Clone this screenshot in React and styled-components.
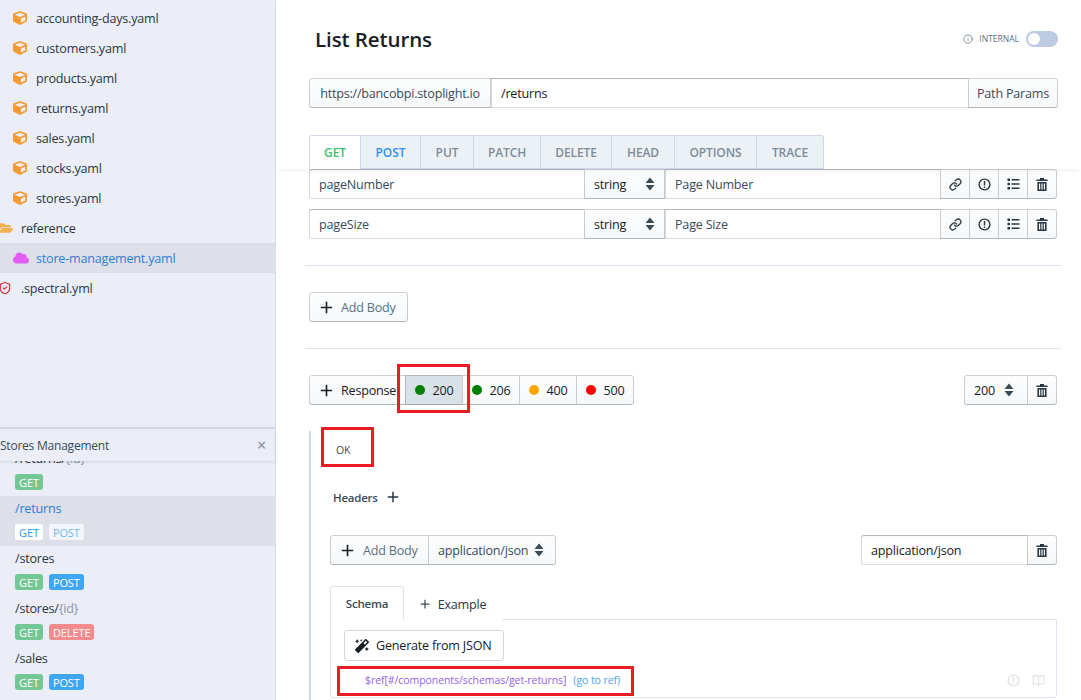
import React from 'react';
import styled, { createGlobalStyle } from 'styled-components';
import { FaCube, FaFolderOpen, FaCloud, FaMagic } from 'react-icons/fa';
import { Link as LinkIcon, ShieldCheck, Info, BookOpen } from 'lucide-react';

const Global = createGlobalStyle`
  html, body { margin: 0; padding: 0; height: 100%; overflow: hidden; background: #fff; }
  body { font-family: "Open Sans", "Noto Sans", sans-serif; font-size: 12.6px; color: #182026; letter-spacing: -0.22px; }
  * { box-sizing: border-box; }
`;

const Page = styled.div`
  position: relative;
  display: flex;
  width: 1081px;
  height: 700px;
  overflow: hidden;
`;

const Sidebar = styled.aside`
  display: flex;
  flex-direction: column;
  width: 276px;
  flex: none;
  height: 700px;
  background: #ebeef7;
  border-right: 1px solid #d8dde8;
`;

const Tree = styled.div`
  height: 429px;
  flex: none;
  padding-top: 3px;
  border-bottom: 2px solid #d2d9e6;
`;

const TreeRow = styled.div`
  display: flex;
  align-items: center;
  height: 30px;
  gap: ${p => (p.$depth ? 10 : 8)}px;
  padding-left: ${p => (p.$depth ? 13 : 0)}px;
  background: ${p => (p.$active ? '#dde0e8' : 'transparent')};
  color: ${p => (p.$active ? '#2b7fd4' : '#293742')};
`;

const TreeIcon = styled.span`
  display: flex;
  align-items: center;
  justify-content: flex-start;
  width: 13px;
  height: 14px;
  flex: none;
  color: ${p => p.$color};
  margin-left: ${p => p.$shift || 0}px;
  margin-right: ${p => -(p.$shift || 0)}px;
  svg { flex: none; }
`;

const PanelHeader = styled.div`
  position: relative;
  z-index: 2;
  display: flex;
  align-items: center;
  justify-content: space-between;
  height: 32px;
  flex: none;
  padding-right: 9px;
  background: #ebeef7;
  box-shadow: 0 1px 3px rgba(16, 22, 26, 0.12);
  color: #394b59;
  font-size: 12px;
`;

const CloseMark = styled.span`
  color: #7c8792;
  font-size: 16px;
  line-height: 1;
`;

const EndpointList = styled.div`
  flex: 1;
  min-height: 0;
  overflow: hidden;
`;

const EndpointTrack = styled.div`
  margin-top: -15px;
`;

const Endpoint = styled.div`
  height: 50px;
  padding: 3px 0 0 15px;
  background: ${p => (p.$active ? '#dde0e8' : 'transparent')};
  color: ${p => (p.$active ? '#2b7fd4' : '#293742')};
`;

const EndpointPath = styled.div`
  height: 20px;
  line-height: 20px;
`;

const PathParam = styled.span`
  color: #8a949e;
`;

const BadgeRow = styled.div`
  display: flex;
  gap: 6px;
  margin-top: 5px;
`;

const Badge = styled.span`
  display: flex;
  align-items: center;
  justify-content: center;
  height: 16px;
  padding: 0 4px;
  border-radius: 3px;
  font-size: 11px;
  font-weight: 500;
  letter-spacing: -0.1px;
  background: ${p => p.$bg};
  color: ${p => p.$fg || '#fff'};
`;

const Main = styled.main`
  flex: 1;
  min-width: 0;
  height: 700px;
  background: #fff;
`;

const Header = styled.header`
  position: relative;
  height: 169px;
  padding: 0 23px 0 33px;
  display: flex;
  flex-direction: column;
  box-shadow: 0 3px 6px -3px rgba(16, 22, 26, 0.1);
`;

const TitleRow = styled.div`
  display: flex;
  align-items: center;
  justify-content: space-between;
  height: 78px;
  padding: 0 0 0 6px;
`;

const Title = styled.h1`
  margin: 0 0 1px;
  font-size: 20.5px;
  font-weight: 600;
  letter-spacing: -0.1px;
  color: #182026;
`;

const InternalToggle = styled.div`
  display: flex;
  align-items: center;
  gap: 6px;
  font-size: 8.5px;
  color: #5c6f88;
  margin-bottom: 1px;
  letter-spacing: 0;
`;

const Toggle = styled.span`
  display: block;
  width: 32px;
  height: 16px;
  margin-left: 1px;
  padding: 2px;
  border-radius: 8px;
  background: #bccae4;
`;

const Knob = styled.span`
  display: block;
  width: 12px;
  height: 12px;
  border-radius: 50%;
  background: #fff;
`;

const Group = styled.div`
  display: flex;
  height: 30px;
  flex: ${p => (p.$fill ? 1 : '0 0 auto')};
`;

const ButtonPart = styled.div`
  display: flex;
  align-items: center;
  justify-content: ${p => (p.$center ? 'center' : p.$spread ? 'space-between' : 'flex-start')};
  gap: ${p => p.$gap ?? 8}px;
  width: ${p => (p.$w ? `${p.$w}px` : 'auto')};
  flex: none;
  padding: 0 ${p => p.$pad ?? 0}px;
  color: ${p => p.$color || '#182026'};
  background: ${p => (p.$on ? '#d8e1e8' : 'linear-gradient(180deg, rgba(255,255,255,0.8), rgba(255,255,255,0)) #f5f8fa')};
  box-shadow: inset 0 0 0 1px rgba(16, 22, 26, 0.2), inset 0 -1px 0 rgba(16, 22, 26, 0.1);
  margin-left: -1px;
  white-space: nowrap;
  &:first-child { margin-left: 0; border-radius: 3px 0 0 3px; }
  &:last-child { border-radius: 0 3px 3px 0; }
  &:only-child { border-radius: 3px; }
`;

const Field = styled.div`
  display: flex;
  align-items: center;
  flex: ${p => (p.$w ? 'none' : 1)};
  width: ${p => (p.$w ? `${p.$w}px` : 'auto')};
  min-width: 0;
  padding: 0 10px;
  background: #fff;
  color: ${p => p.$color || '#182026'};
  box-shadow: inset 0 0 0 1px rgba(16, 22, 26, 0.15), inset 0 1px 1px rgba(16, 22, 26, 0.2);
  white-space: nowrap;
  &:first-child { border-radius: 3px 0 0 3px; }
`;

const MethodTabs = styled.div`
  display: flex;
  margin-top: 27px;
  height: 34px;
`;

const MethodTab = styled.div`
  display: flex;
  align-items: center;
  justify-content: center;
  width: ${p => p.$w}px;
  font-size: 12px;
  font-weight: 600;
  letter-spacing: -0.1px;
  color: ${p => p.$color || '#7e8c9a'};
  background: ${p => (p.$on ? '#fff' : '#ebf1f5')};
  border: 1px solid #d0d8e8;
  border-left-width: ${p => (p.$first ? 1 : 0)}px;
  border-bottom: ${p => (p.$on ? 0 : '1px solid #d0d8e8')};
  border-radius: ${p => (p.$first ? '3px 0 0 0' : p.$last ? '0 3px 0 0' : 0)};
`;

const Content = styled.div`
  padding: 0 24px 0 33px;
`;

const ParamRow = styled.div`
  display: flex;
  margin-bottom: 10px;
`;

const Divider = styled.hr`
  border: 0;
  height: 1px;
  background: #dde3ee;
  margin: 26px -4px;
  width: 756px;
`;

const SpaceRow = styled.div`
  display: flex;
  justify-content: space-between;
`;

const Dot = styled.span`
  width: 10px;
  height: 10px;
  border-radius: 50%;
  background: ${p => p.$color};
  flex: none;
`;

const ResponseBody = styled.div`
  margin-top: 26px;
  height: 300px;
  padding-left: 19px;
  border-left: 2px solid #ced9e0;
`;

const OkLine = styled.div`
  height: 38px;
  padding: 12px 0 0 6px;
  font-size: 10.5px;
  line-height: 14px;
  color: #394b59;
`;

const HeadersRow = styled.div`
  display: flex;
  align-items: center;
  gap: 9px;
  margin-top: 18px;
  padding-left: 3px;
  height: 20px;
  font-size: 11.5px;
  font-weight: 600;
  color: #394b59;
`;

const BodyRow = styled.div`
  display: flex;
  justify-content: space-between;
  margin-top: 28px;
  width: 727px;
`;

const SchemaTabs = styled.div`
  display: flex;
  align-items: flex-start;
  margin-top: 21px;
  height: 33px;
  width: 727px;
`;

const SchemaTab = styled.div`
  display: flex;
  align-items: center;
  justify-content: center;
  position: relative;
  z-index: 1;
  gap: 8px;
  width: ${p => p.$w}px;
  height: 34px;
  padding-top: ${p => (p.$on ? 0 : 2)}px;
  font-size: ${p => (p.$on ? 11.5 : 12.6)}px;
  font-weight: ${p => (p.$on ? 600 : 400)};
  color: ${p => (p.$on ? '#394b59' : '#293742')};
  background: #fff;
  border: ${p => (p.$on ? '1px solid #dde3ee' : 0)};
  border-bottom: 0;
  border-radius: 3px 3px 0 0;
`;

const SchemaPanel = styled.div`
  width: 727px;
  height: 79px;
  padding: 10px 13px 0;
  border: 1px solid #dde3ee;
  border-radius: 0 0 3px 3px;
`;

const OutlineButton = styled.div`
  display: inline-flex;
  align-items: center;
  gap: 7px;
  width: 160px;
  height: 31px;
  padding: 0 10px;
  border: 1px solid #d3d8de;
  border-radius: 3px;
  color: #182026;
  white-space: nowrap;
`;

const RefRow = styled.div`
  display: flex;
  align-items: center;
  height: 20px;
  margin-top: 9px;
  padding-left: 21px;
  font-size: 10.5px;
  letter-spacing: -0.07px;
`;

const RefText = styled.span`
  color: #8f63e8;
`;

const RefLink = styled.span`
  color: #48a4f0;
  margin-left: 7px;
`;

const RefIcons = styled.span`
  display: flex;
  align-items: center;
  gap: 12px;
  margin-left: auto;
  margin-right: -2px;
  color: #dfe3e7;
`;

const Annotation = styled.div`
  position: absolute;
  left: ${p => p.$x}px;
  top: ${p => p.$y}px;
  width: ${p => p.$w}px;
  height: ${p => p.$h}px;
  border: 3px solid #ed1c24;
  z-index: 5;
  pointer-events: none;
`;

const Plus = ({ s = 13, c = '#182026' }) => (
  <svg width={s} height={s} viewBox="0 0 16 16" style={{ flex: 'none' }}>
    <path d="M7 1h2v6h6v2H9v6H7V9H1V7h6z" fill={c} />
  </svg>
);
const Carets = () => (
  <svg width="10" height="14" viewBox="0 0 10 14" style={{ flex: 'none' }}>
    <path d="M5 0.5L9.5 6H0.5zM5 13.5L0.5 8H9.5z" fill="#394b59" />
  </svg>
);
const Trash = () => (
  <svg width="12" height="13" viewBox="0 0 12 13">
    <path d="M4 0h4v1.5h3.6V3H0.4V1.5H4zM1.4 4h9.2v9H1.4zM3 5.4v6.2h1.2V5.4zM5.4 5.4v6.2h1.2V5.4zM7.8 5.4v6.2H9V5.4z" fill="#293742" fillRule="evenodd" />
  </svg>
);
const ErrorIcon = ({ c = '#293742', s = 13 }) => (
  <svg width={s} height={s} viewBox="0 0 13 13">
    <circle cx="6.5" cy="6.5" r="5.4" fill="none" stroke={c} strokeWidth="1.4" />
    <path d="M5.8 3h1.4v4.4H5.8zM5.8 8.4h1.4v1.5H5.8z" fill={c} />
  </svg>
);
const ListIcon = () => (
  <svg width="13" height="12" viewBox="0 0 13 12">
    <path d="M0.5 0.5h2.5v2.5H0.5zM0.5 4.8h2.5v2.5H0.5zM0.5 9h2.5v2.5H0.5zM4.5 1h8v1.5h-8zM4.5 5.2h8v1.5h-8zM4.5 9.5h8v1.5h-8z" fill="#293742" />
  </svg>
);

const files = ['accounting-days', 'customers', 'products', 'returns', 'sales', 'stocks', 'stores'];
const GET = { t: 'GET', bg: '#72c794' };
const POST = { t: 'POST', bg: '#3ea6f5' };
const DEL = { t: 'DELETE', bg: '#f48a8c' };
const endpoints = [
  { path: '/returns/', param: '{id}', badges: [GET] },
  { path: '/returns', active: true, badges: [{ t: 'GET', bg: '#fff', fg: '#2d94ee' }, { t: 'POST', bg: '#f2f5f9', fg: '#70b8f3' }] },
  { path: '/stores', badges: [GET, POST] },
  { path: '/stores/', param: '{id}', badges: [GET, DEL] },
  { path: '/sales', badges: [GET, POST] },
];
const methods = [
  ['GET', 52, '#3dbf76'], ['POST', 60, '#2e90f0'], ['PUT', 53], ['PATCH', 67], ['DELETE', 71],
  ['HEAD', 63], ['OPTIONS', 82], ['TRACE', 67],
];
const params = [['pageNumber', 'Page Number'], ['pageSize', 'Page Size']];
const codes = [['200', 'green', true], ['206', 'green', false], ['400', 'orange', false], ['500', 'red', false]];

export default function App() {
  return (
    <Page>
      <Global />
      <Sidebar>
        <Tree>
          {files.map(f => (
            <TreeRow key={f} $depth={1}>
              <TreeIcon $color="#f59a33"><FaCube size={14} /></TreeIcon>
              <span>{f}.yaml</span>
            </TreeRow>
          ))}
          <TreeRow>
            <TreeIcon $color="#f3b04f" $shift={-1}><FaFolderOpen size={14} /></TreeIcon>
            <span>reference</span>
          </TreeRow>
          <TreeRow $depth={1} $active>
            <TreeIcon $color="#e25cf5"><FaCloud size={16} /></TreeIcon>
            <span>store-management.yaml</span>
          </TreeRow>
          <TreeRow>
            <TreeIcon $color="#d0313d" $shift={-2}><ShieldCheck size={14} strokeWidth={2} /></TreeIcon>
            <span>.spectral.yml</span>
          </TreeRow>
        </Tree>
        <PanelHeader>
          <span>Stores Management</span>
          <CloseMark>×</CloseMark>
        </PanelHeader>
        <EndpointList>
          <EndpointTrack>
            {endpoints.map(e => (
              <Endpoint key={e.path + (e.param || '')} $active={e.active}>
                <EndpointPath>{e.path}{e.param && <PathParam>{e.param}</PathParam>}</EndpointPath>
                <BadgeRow>
                  {e.badges.map(b => <Badge key={b.t} $bg={b.bg} $fg={b.fg}>{b.t}</Badge>)}
                </BadgeRow>
              </Endpoint>
            ))}
          </EndpointTrack>
        </EndpointList>
      </Sidebar>
      <Main>
        <Header>
          <TitleRow>
            <Title>List Returns</Title>
            <InternalToggle>
              <Info size={10} color="#6f7f91" />
              <span>INTERNAL</span>
              <Toggle><Knob /></Toggle>
            </InternalToggle>
          </TitleRow>
          <Group>
            <ButtonPart $w={182} $center $color="#394b59">https://bancobpi.stoplight.io</ButtonPart>
            <Field>/returns</Field>
            <ButtonPart $w={90} $center $color="#394b59">Path Params</ButtonPart>
          </Group>
          <MethodTabs>
            {methods.map(([t, w, c], i) => (
              <MethodTab key={t} $w={w} $color={c} $on={i === 0} $first={i === 0} $last={i === methods.length - 1}>{t}</MethodTab>
            ))}
          </MethodTabs>
        </Header>
        <Content>
          {params.map(([n, d]) => (
            <ParamRow key={n}>
              <Group $fill>
                <Field $w={276} $color="#394b59">{n}</Field>
                <ButtonPart $w={81} $pad={10} $spread>string<Carets /></ButtonPart>
                <Field $color="#394b59">{d}</Field>
                <ButtonPart $w={30} $center><LinkIcon size={13} strokeWidth={2.4} color="#293742" /></ButtonPart>
                <ButtonPart $w={30} $center><ErrorIcon /></ButtonPart>
                <ButtonPart $w={30} $center><ListIcon /></ButtonPart>
                <ButtonPart $w={30} $center><Trash /></ButtonPart>
              </Group>
            </ParamRow>
          ))}
          <Divider />
          <Group>
            <ButtonPart $w={99} $pad={11} $gap={8} $color="#5c7080"><Plus />Add Body</ButtonPart>
          </Group>
          <Divider />
          <SpaceRow>
            <Group>
              <ButtonPart $w={97} $pad={11} $gap={8}><Plus />Response</ButtonPart>
              {codes.map(([c, col, on]) => (
                <ButtonPart key={c} $w={58} $on={on} $center $gap={8}><Dot $color={col} />{c}</ButtonPart>
              ))}
            </Group>
            <Group>
              <ButtonPart $w={64} $pad={10} $gap={9}>200<Carets /></ButtonPart>
              <ButtonPart $w={30} $center><Trash /></ButtonPart>
            </Group>
          </SpaceRow>
          <ResponseBody>
            <OkLine>OK</OkLine>
            <HeadersRow>Headers <Plus s={12} c="#293742" /></HeadersRow>
            <BodyRow>
              <Group>
                <ButtonPart $w={99} $pad={11} $gap={9} $color="#5c7080"><Plus />Add Body</ButtonPart>
                <ButtonPart $w={128} $pad={10} $gap={6} $color="#394b59">application/json<Carets /></ButtonPart>
              </Group>
              <Group>
                <Field $w={167}>application/json</Field>
                <ButtonPart $w={30} $center><Trash /></ButtonPart>
              </Group>
            </BodyRow>
            <SchemaTabs>
              <SchemaTab $on $w={74}>Schema</SchemaTab>
              <SchemaTab $w={98}><Plus s={10} c="#394b59" />Example</SchemaTab>
            </SchemaTabs>
            <SchemaPanel>
              <OutlineButton><FaMagic size={14} color="#182026" />Generate from JSON</OutlineButton>
              <RefRow>
                <RefText>$ref[#/components/schemas/get-returns]</RefText>
                <RefLink>(go to ref)</RefLink>
                <RefIcons>
                  <ErrorIcon c="#dfe3e7" s={13} />
                  <BookOpen size={13} />
                </RefIcons>
              </RefRow>
            </SchemaPanel>
          </ResponseBody>
        </Content>
      </Main>
      <Annotation $x={397} $y={364} $w={73} $h={49} />
      <Annotation $x={321} $y={427} $w={53} $h={40} />
      <Annotation $x={337} $y={666} $w={297} $h={30} />
    </Page>
  );
}
